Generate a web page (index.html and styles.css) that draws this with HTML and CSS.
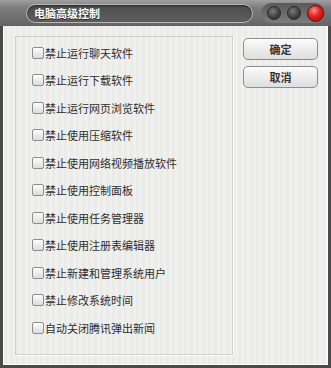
FILE: index.html
```html
<!DOCTYPE html>
<html lang="zh-CN">
<head>
    <meta charset="UTF-8">
    <title>电脑高级控制</title>
    <link rel="stylesheet" href="styles.css">
</head>
<body>
    <div class="window">
        <div class="titlebar">
            <div class="title-pill">电脑高级控制</div>
            <div class="controls">
                <span class="ctl"></span>
                <span class="ctl"></span>
                <span class="ctl ctl-close"></span>
            </div>
        </div>

        <div class="client">
            <div class="group">
                <label class="option"><span class="box"></span>禁止运行聊天软件</label>
                <label class="option"><span class="box"></span>禁止运行下载软件</label>
                <label class="option"><span class="box"></span>禁止运行网页浏览软件</label>
                <label class="option"><span class="box"></span>禁止使用压缩软件</label>
                <label class="option"><span class="box"></span>禁止使用网络视频播放软件</label>
                <label class="option"><span class="box"></span>禁止使用控制面板</label>
                <label class="option"><span class="box"></span>禁止使用任务管理器</label>
                <label class="option"><span class="box"></span>禁止使用注册表编辑器</label>
                <label class="option"><span class="box"></span>禁止新建和管理系统用户</label>
                <label class="option"><span class="box"></span>禁止修改系统时间</label>
                <label class="option"><span class="box"></span>自动关闭腾讯弹出新闻</label>
            </div>

            <div class="actions">
                <button class="btn">确定</button>
                <button class="btn">取消</button>
            </div>
        </div>
    </div>
</body>
</html>
```

FILE: styles.css
```css
* {
    margin: 0;
    padding: 0;
    box-sizing: border-box;
}

body {
    background: #ffffff;
    font-family: "Noto Sans CJK SC", "Noto Sans", sans-serif;
}

.window {
    width: 331px;
    height: 368px;
    display: flex;
    flex-direction: column;
    background: #4a4a4a;
    padding: 0 3px 3px 3px;
}

/* title bar */
.titlebar {
    height: 26px;
    display: flex;
    align-items: center;
    background: linear-gradient(#a0a0a0 0%, #7c7c7c 30%, #646464 100%);
    margin: 0 -3px;
    padding: 0 6px 0 26px;
}

.title-pill {
    width: 227px;
    height: 19px;
    border-radius: 10px;
    border: 1px solid #b8b8b8;
    background: linear-gradient(#4c4c4c, #5e5e5e);
    box-shadow: inset 0 1px 2px rgba(0, 0, 0, 0.5);
    color: #ffffff;
    font-size: 11px;
    font-weight: bold;
    line-height: 17px;
    padding-left: 7px;
    text-shadow: 0 1px 0 #2a2a2a;
}

.controls {
    margin-left: auto;
    display: flex;
    align-items: center;
    gap: 6px;
    height: 20px;
    padding: 0 1px 0 6px;
    border-radius: 10px;
    background: linear-gradient(#5a5a5a, #7c7c7c);
}

.ctl {
    width: 14px;
    height: 14px;
    border-radius: 50%;
    background: radial-gradient(circle at 40% 35%, #7a7a7a 0%, #3e3e3e 60%, #2c2c2c 100%);
    border: 1px solid #2a2a2a;
}

.ctl-close {
    width: 17px;
    height: 17px;
    background: radial-gradient(circle at 40% 30%, #ff8a8a 0%, #e02020 45%, #9a0c0c 100%);
    border-color: #6a0a0a;
}

/* client area */
.client {
    flex: 1;
    display: flex;
    align-items: flex-start;
    gap: 10px;
    padding: 10px 0 0 11px;
    border: 1px solid #ffffff;
    border-top: none;
    background: repeating-linear-gradient(90deg, #ebebe9 0 3px, #f0f0ee 3px 6px);
}

.group {
    width: 218px;
    height: 319px;
    border: 1px solid #cfcfcf;
    box-shadow: 1px 1px 0 #ffffff;
    padding: 2px 0 0 16px;
    display: flex;
    flex-direction: column;
}

.option {
    height: 27.5px;
    display: flex;
    align-items: center;
    font-size: 11px;
    color: #2e2e2e;
}

.box {
    width: 12px;
    height: 12px;
    border: 1px solid #8e8e8e;
    border-radius: 2px;
    background: linear-gradient(#fdfdfd, #dcdcdc);
    margin-right: 1px;
}

.actions {
    display: flex;
    flex-direction: column;
    gap: 6px;
    padding-top: 2px;
}

.btn {
    width: 75px;
    height: 22px;
    border: 1px solid #8c8c8c;
    border-radius: 5px;
    background: linear-gradient(#fbfbfb, #dedede);
    box-shadow: inset 0 1px 0 #ffffff;
    font-family: "Noto Sans CJK SC", "Noto Sans", sans-serif;
    font-size: 11px;
    font-weight: bold;
    color: #333333;
}
```
